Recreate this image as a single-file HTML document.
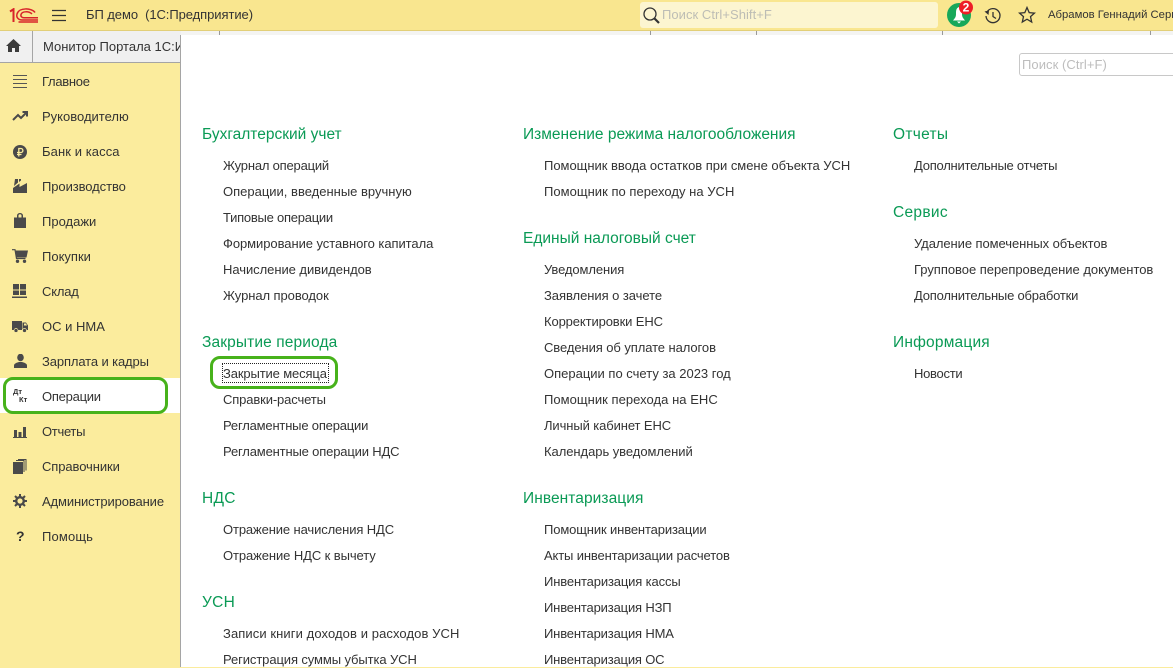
<!DOCTYPE html>
<html lang="ru"><head><meta charset="utf-8"><title>БП демо</title>
<style>
html,body{margin:0;padding:0}
body{width:1173px;height:667px;overflow:hidden;position:relative;background:#fbec9d;font-family:"Liberation Sans",sans-serif;font-size:13px;color:#333}
.a{position:absolute;white-space:nowrap}
svg{position:absolute;display:block}
.m{left:42px;color:#333;line-height:16px}
.h{font-size:15.5px;color:#0a9a55;line-height:20px;margin-top:1px}
.l{color:#333;line-height:16px}
</style></head><body>
<div class="a" style="left:0;top:0;width:1173px;height:30px;background:#f9e68f;border-bottom:1px solid #e2cf78"></div>
<svg style="left:9px;top:8px" width="30" height="15" viewBox="0 0 30 15"><path d="M1 3.500L4.500 1.200V14" fill="none" stroke="#d8232a" stroke-width="2"/><path d="M9.500 14H29M26 4.500C23 0 10 -1 8 6C7 10 10 12 13 12H29M23 6C20 3 13 3 12 6.500C11.500 8.500 13 9.800 15 9.800H29" fill="none" stroke="#d8232a" stroke-width="1.500"/></svg>
<svg style="left:52px;top:9px" width="15" height="13"><path d="M0 1.500H14M0 6.500H14M0 11.500H14" stroke="#333" stroke-width="1.200"/></svg>
<div class="a" style="left:86px;top:7px;line-height:16px;color:#333;letter-spacing:-.07px">БП демо&nbsp; (1С:Предприятие)</div>
<div class="a" style="left:640px;top:2px;width:298px;height:26px;background:#fcf5d0;border-radius:3px"></div>
<svg style="left:642px;top:6px" width="18" height="18"><circle cx="8" cy="8" r="6" fill="none" stroke="#333" stroke-width="1.300"/><path d="M12 12L17 17" stroke="#333" stroke-width="2.200"/></svg>
<div class="a" style="left:662px;top:7px;line-height:16px;color:#bdbdb5;letter-spacing:.05px">Поиск Ctrl+Shift+F</div>
<svg style="left:945px;top:0" width="32" height="30"><circle cx="14" cy="15" r="12" fill="#17a85a"/><path d="M14 7C11 8 11 11 11 14C11 17 10 18 8 20.500H20C18 18 17 17 17 14C17 11 17 8 14 7ZM12 21.500H16L14 23.500Z" fill="#fff"/><circle cx="21" cy="7.500" r="7" fill="#ee1c25"/><text x="21" y="11.500" font-family="Liberation Sans" font-size="12" font-weight="700" fill="#fff" text-anchor="middle">2</text></svg>
<svg style="left:984px;top:7px" width="18" height="18" viewBox="0 0 18 18"><path d="M3 5A7 7 0 1 1 2 9M9 5V9.500L12 11.500" fill="none" stroke="#333" stroke-width="1.300"/><path d="M0.500 4.500L5 3.500L4.500 8Z" fill="#333"/></svg>
<svg style="left:1018px;top:6px" width="18" height="18" viewBox="0 0 18 18"><path d="M9 1.500L11.200 6.600L16.500 7.100L12.500 10.600L13.700 16L9 13.200L4.300 16L5.500 10.600L1.500 7.100L6.800 6.600Z" fill="none" stroke="#333" stroke-width="1.300"/></svg>
<div class="a" style="left:1048px;top:8px;font-size:11.300px;line-height:14px;color:#333">Абрамов Геннадий Сергеевич</div>
<div class="a" style="left:0;top:31px;width:1173px;height:4px;background:#f4f4f2;border-bottom:1px solid #a5a5a5"></div>
<div class="a" style="left:219px;top:31px;width:1px;height:4px;background:#999"></div>
<div class="a" style="left:650px;top:31px;width:1px;height:4px;background:#999"></div>
<div class="a" style="left:756px;top:31px;width:1px;height:4px;background:#999"></div>
<div class="a" style="left:942px;top:31px;width:1px;height:4px;background:#999"></div>
<div class="a" style="left:1150px;top:31px;width:1px;height:4px;background:#999"></div>
<div class="a" style="left:0;top:31px;width:181px;height:31px;background:#f0f0f0;border-bottom:1px solid #a5a5a5"></div>
<div class="a" style="left:32px;top:31px;width:1px;height:31px;background:#a5a5a5"></div>
<svg style="left:6px;top:39px" width="15" height="13"><path d="M7.500 0L15 7H13V13H9V9H6V13H2V7H0Z" fill="#3c3c3c"/></svg>
<div class="a" style="left:43px;top:39px;width:137px;overflow:hidden;line-height:16px;color:#333">Монитор Портала 1С:ИТС</div>
<div class="a" style="left:180px;top:35px;width:993px;height:632px;background:#fff;border-left:1px solid #a5a5a5"></div>
<div class="a" style="left:1019px;top:53px;width:170px;height:21px;border:1px solid #c8c8c8;border-radius:3px;background:#fff"></div>
<div class="a" style="left:1022px;top:57px;line-height:16px;color:#bdbdbd;letter-spacing:.06px">Поиск (Ctrl+F)</div>

<svg style="left:13px;top:75px" width="14" height="13"><path d="M0 .5H14M0 4.500H14M0 8.500H14M0 12.500H14" stroke="#555" stroke-width="1"/></svg>
<svg style="left:12px;top:110px" width="16" height="12"><path d="M1 10L6 5L9 8L14 3M10.500 2H15V6.500" fill="none" stroke="#4a4a4a" stroke-width="2"/></svg>
<svg style="left:13px;top:145px" width="15" height="15"><circle cx="7" cy="7" r="7" fill="#4a4a4a"/><path d="M5.800 11.500V3.500H8C10.500 3.500 10.500 7.500 8 7.500H4M4 9.500H8.500" fill="none" stroke="#fbec9d" stroke-width="1.300"/></svg>
<svg style="left:13px;top:178px" width="14" height="15"><path d="M0 15V10L6.500 5.500V9L14 5V15Z" fill="#4a4a4a"/><path d="M1 8L2 1H5V4.500Z M6 1H8V2.500L6 4Z" fill="#4a4a4a"/></svg>
<svg style="left:14px;top:213px" width="12" height="15"><path d="M0 4.500H3V2.500A3 2.500 0 0 1 9 2.500V4.500H12V15H0ZM4.500 4.500H7.500V2.500A1.500 1.300 0 0 0 4.500 2.500Z" fill="#4a4a4a" fill-rule="evenodd"/></svg>
<svg style="left:12px;top:249px" width="16" height="14"><path d="M0 .7H3L4.500 9.500H13.500" fill="none" stroke="#4a4a4a" stroke-width="1.200"/><path d="M3.500 1.500H16L14.500 8.500H4.500Z" fill="#4a4a4a"/><circle cx="5.500" cy="12.300" r="1.700" fill="#4a4a4a"/><circle cx="12.500" cy="12.300" r="1.700" fill="#4a4a4a"/></svg>
<svg style="left:12px;top:284px" width="15" height="14"><path d="M1 0H7V5.500H1ZM8 0H14V5.500H8ZM1 6.500H7V11H1ZM8 6.500H14V11H8ZM0 12.500H15V14H0Z" fill="#4a4a4a"/></svg>
<svg style="left:12px;top:320px" width="16" height="13"><path d="M0 1H10V10H0ZM10.500 2.500H14L16 5.500V10H10.500Z" fill="#4a4a4a"/><path d="M12 3.500H14L15 5.500H12Z" fill="#fbec9d"/><circle cx="4" cy="10.500" r="2" fill="#4a4a4a" stroke="#fbec9d" stroke-width=".7"/><circle cx="12.500" cy="10.500" r="2" fill="#4a4a4a" stroke="#fbec9d" stroke-width=".7"/></svg>
<svg style="left:14px;top:354px" width="13" height="14"><ellipse cx="6.500" cy="3.500" rx="3.300" ry="3.800" fill="#4a4a4a"/><path d="M0 14V11.500C0 9.500 3 8.500 5 8H8C10 8.500 13 9.500 13 11.500V14Z" fill="#4a4a4a"/></svg>

<div class="a" style="left:0;top:378px;width:180px;height:35px;background:#fff"></div>
<div class="a" style="left:3px;top:377px;width:159px;height:31px;border:3px solid #47b21b;border-radius:10px"></div>
<div class="a" style="left:13px;top:388px;font-size:7.500px;font-weight:700;line-height:8px;color:#333">Дт</div>
<div class="a" style="left:19px;top:396px;font-size:7.500px;font-weight:700;line-height:8px;color:#333">Кт</div>
<svg style="left:13px;top:427px" width="14" height="11"><path d="M1 3H4V10H1ZM5.500 5H8.500V10H5.500ZM10 0H13V10H10ZM0 10H14V11H0Z" fill="#4a4a4a"/></svg>
<svg style="left:13px;top:459px" width="14" height="15"><path d="M0 3H10V15H0Z" fill="#4a4a4a"/><path d="M11 13V1.500H3M13 11.500V.5H5" fill="none" stroke="#4a4a4a"/></svg>
<svg style="left:13px;top:494px" width="14" height="14" viewBox="0 0 14 14"><circle cx="7" cy="7" r="3.800" fill="none" stroke="#4a4a4a" stroke-width="2.400"/><path d="M7 0V3M7 11V14M0 7H3M11 7H14M2 2L4 4M10 10L12 12M12 2L10 4M4 10L2 12" stroke="#4a4a4a" stroke-width="2"/></svg>
<div class="a" style="left:16px;top:528px;font-size:14px;font-weight:700;line-height:16px;color:#333">?</div>

<div class="a m" style="top:74px;letter-spacing:-.28px">Главное</div>
<div class="a m" style="top:109px">Руководителю</div>
<div class="a m" style="top:144px;letter-spacing:.09px">Банк и касса</div>
<div class="a m" style="top:179px;letter-spacing:-.08px">Производство</div>
<div class="a m" style="top:214px">Продажи</div>
<div class="a m" style="top:249px">Покупки</div>
<div class="a m" style="top:284px;letter-spacing:-.2px">Склад</div>
<div class="a m" style="top:319px">ОС и НМА</div>
<div class="a m" style="top:354px;letter-spacing:-.12px">Зарплата и кадры</div>
<div class="a m" style="top:389px;letter-spacing:-.25px">Операции</div>
<div class="a m" style="top:424px;letter-spacing:-.3px">Отчеты</div>
<div class="a m" style="top:459px;letter-spacing:-.09px">Справочники</div>
<div class="a m" style="top:494px;letter-spacing:-.12px">Администрирование</div>
<div class="a m" style="top:529px;letter-spacing:.15px">Помощь</div>

<div class="a h" style="left:202px;top:124px">Бухгалтерский учет</div>
<div class="a l" style="left:223px;top:158px;letter-spacing:-.2px">Журнал операций</div>
<div class="a l" style="left:223px;top:184px">Операции, введенные вручную</div>
<div class="a l" style="left:223px;top:210px;letter-spacing:-.25px">Типовые операции</div>
<div class="a l" style="left:223px;top:236px;letter-spacing:-.06px">Формирование уставного капитала</div>
<div class="a l" style="left:223px;top:262px;letter-spacing:-.05px">Начисление дивидендов</div>
<div class="a l" style="left:223px;top:288px;letter-spacing:-.07px">Журнал проводок</div>
<div class="a h" style="left:202px;top:332px;letter-spacing:.12px">Закрытие периода</div>
<div class="a" style="left:210px;top:356px;width:122px;height:27px;border:3px solid #47b21b;border-radius:10px"></div>
<div class="a" style="left:222px;top:363px;width:105px;height:18px;border:1px dotted #222"></div>
<div class="a l" style="left:223px;top:366px;letter-spacing:-.13px">Закрытие месяца</div>
<div class="a l" style="left:223px;top:392px;letter-spacing:-.13px">Справки-расчеты</div>
<div class="a l" style="left:223px;top:418px;letter-spacing:-.19px">Регламентные операции</div>
<div class="a l" style="left:223px;top:444px;letter-spacing:-.16px">Регламентные операции НДС</div>
<div class="a h" style="left:202px;top:488px;letter-spacing:.3px">НДС</div>
<div class="a l" style="left:223px;top:522px;letter-spacing:-.12px">Отражение начисления НДС</div>
<div class="a l" style="left:223px;top:548px;letter-spacing:-.09px">Отражение НДС к вычету</div>
<div class="a h" style="left:202px;top:592px;letter-spacing:.3px">УСН</div>
<div class="a l" style="left:223px;top:626px;letter-spacing:.09px">Записи книги доходов и расходов УСН</div>
<div class="a l" style="left:223px;top:652px;letter-spacing:-.1px">Регистрация суммы убытка УСН</div>

<div class="a h" style="left:523px;top:124px">Изменение режима налогообложения</div>
<div class="a l" style="left:544px;top:158px;letter-spacing:-.02px">Помощник ввода остатков при смене объекта УСН</div>
<div class="a l" style="left:544px;top:184px;letter-spacing:.03px">Помощник по переходу на УСН</div>
<div class="a h" style="left:523px;top:228px">Единый налоговый счет</div>
<div class="a l" style="left:544px;top:262px;letter-spacing:-.1px">Уведомления</div>
<div class="a l" style="left:544px;top:288px;letter-spacing:-.05px">Заявления о зачете</div>
<div class="a l" style="left:544px;top:314px;letter-spacing:-.12px">Корректировки ЕНС</div>
<div class="a l" style="left:544px;top:340px;letter-spacing:-.08px">Сведения об уплате налогов</div>
<div class="a l" style="left:544px;top:366px">Операции по счету за 2023 год</div>
<div class="a l" style="left:544px;top:392px;letter-spacing:.04px">Помощник перехода на ЕНС</div>
<div class="a l" style="left:544px;top:418px;letter-spacing:-.1px">Личный кабинет ЕНС</div>
<div class="a l" style="left:544px;top:444px;letter-spacing:-.05px">Календарь уведомлений</div>
<div class="a h" style="left:523px;top:488px;letter-spacing:.07px">Инвентаризация</div>
<div class="a l" style="left:544px;top:522px;letter-spacing:-.13px">Помощник инвентаризации</div>
<div class="a l" style="left:544px;top:548px;letter-spacing:-.14px">Акты инвентаризации расчетов</div>
<div class="a l" style="left:544px;top:574px;letter-spacing:-.14px">Инвентаризация кассы</div>
<div class="a l" style="left:544px;top:600px;letter-spacing:-.16px">Инвентаризация НЗП</div>
<div class="a l" style="left:544px;top:626px;letter-spacing:-.16px">Инвентаризация НМА</div>
<div class="a l" style="left:544px;top:652px;letter-spacing:-.17px">Инвентаризация ОС</div>

<div class="a h" style="left:893px;top:124px;letter-spacing:.3px">Отчеты</div>
<div class="a l" style="left:914px;top:158px;letter-spacing:-.24px">Дополнительные отчеты</div>
<div class="a h" style="left:893px;top:202px;letter-spacing:.3px">Сервис</div>
<div class="a l" style="left:914px;top:236px;letter-spacing:-.07px">Удаление помеченных объектов</div>
<div class="a l" style="left:914px;top:262px;letter-spacing:-.03px">Групповое перепроведение документов</div>
<div class="a l" style="left:914px;top:288px;letter-spacing:-.2px">Дополнительные обработки</div>
<div class="a h" style="left:893px;top:332px;letter-spacing:.2px">Информация</div>
<div class="a l" style="left:914px;top:366px;letter-spacing:-.28px">Новости</div>
</body></html>
